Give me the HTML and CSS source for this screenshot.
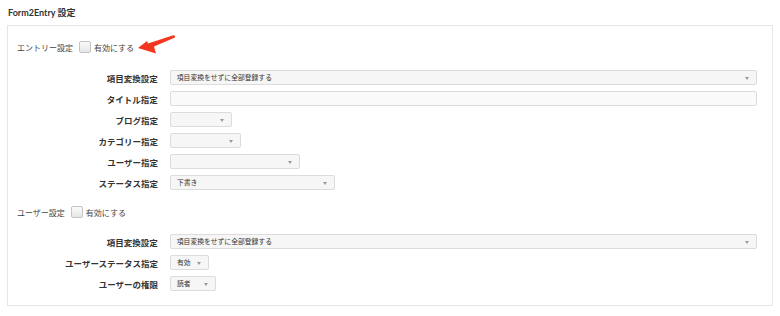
FILE: index.html
```html
<!DOCTYPE html>
<html lang="ja">
<head>
<meta charset="utf-8">
<title>Form2Entry 設定</title>
<link rel="stylesheet" href="styles.css">
</head>
<body>
<h2 class="title">Form2Entry 設定</h2>
<div class="panel">
  <div class="section-head">
    <span class="section-label">エントリー設定</span>
    <label class="check"><span class="box"></span>有効にする</label>
    <svg class="arrow" width="40" height="20" viewBox="0 0 40 20"><path d="M1 14 L10 7 L11 9.5 L35.5 1.5 Q38.5 0.8 38 3.5 L17 12.5 L19 19.5 Z" fill="#f3361f"/></svg>
  </div>
  <div class="rows">
    <div class="row"><span class="lbl">項目変換設定</span><div class="sel w-full">項目変換をせずに全部登録する<i class="caret"></i></div></div>
    <div class="row"><span class="lbl">タイトル指定</span><div class="inp w-full"></div></div>
    <div class="row"><span class="lbl">ブログ指定</span><div class="sel w-blog"><i class="caret"></i></div></div>
    <div class="row"><span class="lbl">カテゴリー指定</span><div class="sel w-cat"><i class="caret"></i></div></div>
    <div class="row"><span class="lbl">ユーザー指定</span><div class="sel w-user"><i class="caret"></i></div></div>
    <div class="row"><span class="lbl">ステータス指定</span><div class="sel w-status">下書き<i class="caret"></i></div></div>
  </div>
  <div class="section-head second">
    <span class="section-label">ユーザー設定</span>
    <label class="check"><span class="box"></span>有効にする</label>
  </div>
  <div class="rows">
    <div class="row"><span class="lbl">項目変換設定</span><div class="sel w-full">項目変換をせずに全部登録する<i class="caret"></i></div></div>
    <div class="row"><span class="lbl">ユーザーステータス指定</span><div class="sel w-ustat">有効<i class="caret"></i></div></div>
    <div class="row"><span class="lbl">ユーザーの権限</span><div class="sel w-role">読者<i class="caret"></i></div></div>
  </div>
</div>
</body>
</html>
```
FILE: styles.css
```css
* { box-sizing: border-box; }
body {
  margin: 0;
  padding: 6px 7px 0 7px;
  width: 780px;
  font-family: "Lato", "Noto Sans CJK JP", sans-serif;
  color: #333;
  background: #fff;
}
.title {
  margin: 0 0 5px 1px;
  font-size: 9px;
  line-height: 14px;
  font-weight: bold;
  color: #333;
}
.panel {
  width: 766px;
  height: 281px;
  border: 1px solid #e6e6e6;
  padding: 11px 15px 0 9px;
}
.section-head {
  display: flex;
  align-items: center;
  height: 20px;
  margin-bottom: 13px;
  font-size: 8px;
  color: #444;
}
.section-head.second {
  margin-top: 12px;
  margin-bottom: 12px;
}
.section-label { margin-right: 6px; }
.check {
  display: flex;
  align-items: center;
  gap: 3px;
}
.box {
  width: 12px;
  height: 12px;
  border: 1px solid #c4c4c4;
  border-radius: 2px;
  background: linear-gradient(#fafafa, #e6e6e6);
}
.arrow { margin-left: 3px; margin-top: -6px; }
.rows {
  display: flex;
  flex-direction: column;
  gap: 6px;
}
.row {
  display: flex;
  align-items: center;
  gap: 12px;
  height: 15px;
}
.lbl {
  width: 141px;
  text-align: right;
  font-size: 8.5px;
  font-weight: bold;
  color: #333;
  white-space: nowrap;
}
.sel, .inp {
  position: relative;
  height: 15px;
  border: 1px solid #dcdcdc;
  border-radius: 2px;
  background: #f6f6f6;
  font-size: 6.8px;
  line-height: 13px;
  padding-left: 6px;
  color: #333;
  white-space: nowrap;
}
.inp { background: #fafafa; }
.caret {
  position: absolute;
  right: 7px;
  top: 6px;
  width: 0;
  height: 0;
  border-left: 2.5px solid transparent;
  border-right: 2.5px solid transparent;
  border-top: 3px solid #999;
}
.w-full { width: 588px; }
.w-blog { width: 62px; }
.w-cat { width: 71px; }
.w-user { width: 130px; }
.w-status { width: 165px; }
.w-ustat { width: 39px; }
.w-role { width: 46px; }
```
